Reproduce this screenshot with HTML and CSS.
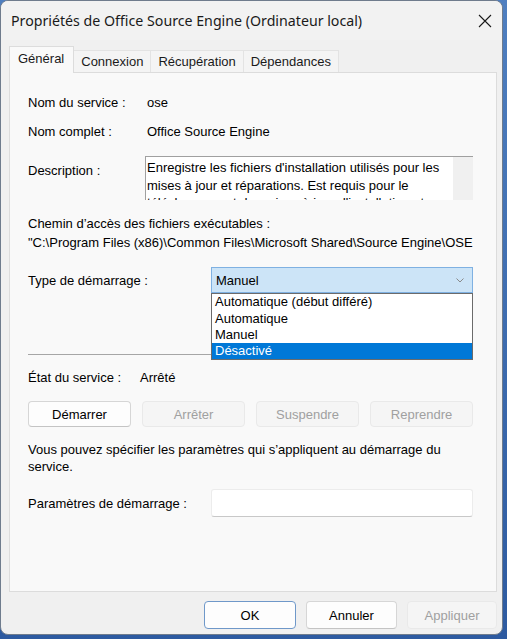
FILE: index.html
```html
<!DOCTYPE html>
<html lang="fr">
<head>
<meta charset="utf-8">
<title>Propriétés de Office Source Engine</title>
<link rel="stylesheet" href="styles.css">
</head>
<body>
<div class="window">
  <div class="titlebar">
    <span class="title">Propriétés de Office Source Engine (Ordinateur local)</span>
    <svg class="close" width="14" height="14" viewBox="0 0 14 14"><path d="M1 1 L13 13 M13 1 L1 13" stroke="#1a1a1a" stroke-width="1.1" fill="none"/></svg>
  </div>
  <div class="tabs">
    <div class="tab active">Général</div>
    <div class="tab">Connexion</div>
    <div class="tab">Récupération</div>
    <div class="tab">Dépendances</div>
  </div>
  <div class="pane">
    <div class="row r1"><span class="lab">Nom du service :</span><span class="val">ose</span></div>
    <div class="row r2"><span class="lab">Nom complet :</span><span class="val">Office Source Engine</span></div>
    <div class="row r3">
      <span class="lab desc-lab">Description :</span>
      <div class="descbox">
        <div class="desctext">Enregistre les fichiers d'installation utilisés pour les mises à jour et réparations. Est requis pour le téléchargement des mises à jour d'installation et</div>
        <div class="scroll"></div>
      </div>
    </div>
    <div class="pathlab">Chemin d’accès des fichiers exécutables :</div>
    <div class="path">"C:\Program Files (x86)\Common Files\Microsoft Shared\Source Engine\OSE</div>
    <div class="row2 r4">
      <span class="lab">Type de démarrage :</span>
      <div class="combo-wrap">
        <div class="combo"><span>Manuel</span><svg width="8" height="5" viewBox="0 0 8 5"><path d="M0.5 0.5 L4 4 L7.5 0.5" stroke="#8a8a8a" stroke-width="1" fill="none"/></svg></div>
        <ul class="droplist">
          <li>Automatique (début différé)</li>
          <li>Automatique</li>
          <li>Manuel</li>
          <li class="sel">Désactivé</li>
        </ul>
      </div>
    </div>
    <div class="sep"></div>
    <div class="row r5"><span class="lab lab-etat">État du service :</span><span class="val">Arrêté</span></div>
    <div class="btns">
      <button class="btn">Démarrer</button>
      <button class="btn dis">Arrêter</button>
      <button class="btn dis">Suspendre</button>
      <button class="btn dis">Reprendre</button>
    </div>
    <p class="para">Vous pouvez spécifier les paramètres qui s’appliquent au démarrage du service.</p>
    <div class="row2 r6">
      <span class="lab">Paramètres de démarrage :</span>
      <div class="input"></div>
    </div>
  </div>
  <div class="footer">
    <button class="fbtn def">OK</button>
    <button class="fbtn cancel">Annuler</button>
    <button class="fbtn dis apply">Appliquer</button>
  </div>
</div>
</body>
</html>
```
FILE: styles.css
```css
html, body {
  margin: 0;
  padding: 0;
}
body {
  width: 507px;
  height: 639px;
  overflow: hidden;
  background: linear-gradient(180deg, #4f7fc0 0%, #2d5aa0 100%);
  font-family: "Liberation Sans", Arial, sans-serif;
  font-size: 13px;
  color: #000;
}
.window {
  box-sizing: border-box;
  width: 503px;
  height: 635px;
  border: 1px solid #6f7c8d;
  border-radius: 8px;
  background: #f0f0f0;
  display: flex;
  flex-direction: column;
  overflow: hidden;
}
.titlebar {
  height: 39px;
  flex: none;
  display: flex;
  align-items: center;
  padding-left: 10px;
  background: #f2f2f2;
}
.title {
  font-family: "Noto Sans", "Open Sans", sans-serif;
  font-size: 14.2px;
  color: #1a1a1a;
}
.close {
  margin-left: auto;
  margin-right: 10px;
}
.tabs {
  height: 32px;
  flex: none;
  display: flex;
  align-items: flex-end;
  padding-left: 8px;
}
.tab {
  box-sizing: border-box;
  height: 22px;
  line-height: 21px;
  padding: 0 7px 0 7px;
  background: #f4f4f4;
  border: 1px solid #e3e3e3;
  border-bottom: none;
  margin-left: -1px;
  color: #1a1a1a;
}
.tab.active {
  height: 27px;
  line-height: 24px;
  padding: 0 9px 0 8px;
  background: #f9f9f9;
  border-color: #dcdcdc;
  margin-left: 0;
  position: relative;
  z-index: 1;
  margin-bottom: -1px;
}
.pane {
  box-sizing: border-box;
  flex: none;
  height: 520px;
  margin: 0 5px 0 8px;
  background: #f9f9f9;
  border: 1px solid #dcdcdc;
  padding: 22px 23px 0 18px;
}
.row {
  display: grid;
  grid-template-columns: 117px 1fr;
  line-height: 16px;
}
.val {
  padding-left: 2px;
}
.r2 { margin-top: 13px; }
.r3 { margin-top: 16px; align-items: start; }
.desc-lab { margin-top: 7px; }
.descbox {
  box-sizing: border-box;
  height: 44px;
  border-top: 1px solid #a0a0a0;
  border-left: 1px solid #a0a0a0;
  background: #fff;
  display: flex;
  overflow: hidden;
}
.desctext {
  flex: 1;
  padding: 2px 0 0 1px;
  line-height: 17.5px;
}
.scroll {
  width: 20px;
  flex: none;
  background: #f0f0f0;
}
.pathlab {
  margin-top: 16px;
  line-height: 16px;
}
.path {
  margin-top: 3px;
  line-height: 16px;
  white-space: nowrap;
}
.row2 {
  display: grid;
  grid-template-columns: 183px 1fr;
  align-items: center;
}
.r4 { margin-top: 16px; }
.combo-wrap {
  position: relative;
}
.combo {
  box-sizing: border-box;
  height: 26px;
  background: #cce4f7;
  border: 1px solid #7fb1e2;
  display: flex;
  align-items: center;
  justify-content: space-between;
  padding: 1px 8px 0 4px;
}
.droplist {
  position: absolute;
  left: 0;
  right: 0;
  top: 26px;
  margin: 0;
  padding: 0;
  list-style: none;
  background: #fff;
  border: 1px solid #6b6b6b;
  z-index: 2;
}
.droplist li {
  height: 16px;
  line-height: 16px;
  padding-left: 3px;
  margin-top: 0.3px;
}
.droplist li.sel {
  background: #0078d7;
  color: #fff;
}
.sep {
  margin-top: 61px;
  height: 1px;
  background: #a6a6a6;
}
.r5 {
  margin-top: 15px;
  grid-template-columns: 110px 1fr;
}
.btns {
  margin-top: 15px;
  display: grid;
  grid-template-columns: repeat(4, 1fr);
  column-gap: 11px;
}
.btn, .fbtn {
  box-sizing: border-box;
  height: 26px;
  font-family: inherit;
  font-size: 13px;
  color: #000;
  background: #fdfdfd;
  border: 1px solid #d6d6d6;
  border-bottom-color: #c4c4c4;
  border-radius: 4px;
  padding: 0;
}
.btn.dis, .fbtn.dis {
  background: #f5f5f5;
  border-color: #e9e9e9;
  color: #a0a0a0;
}
.para {
  margin: 14px 0 0 0;
  line-height: 17px;
}
.r6 { margin-top: 14px; }
.input {
  box-sizing: border-box;
  height: 28px;
  background: #fff;
  border: 1px solid #ececec;
  border-bottom-color: #c8c8c8;
  border-radius: 3px;
}
.footer {
  display: flex;
  justify-content: flex-end;
  gap: 10px;
  padding: 9px 5px 0 0;
}
.fbtn {
  width: 92px;
  height: 28px;
}
.fbtn.cancel { width: 91px; }
.fbtn.apply { width: 90px; }
.fbtn.def {
  border: 1px solid #6f98c9;
}
```
